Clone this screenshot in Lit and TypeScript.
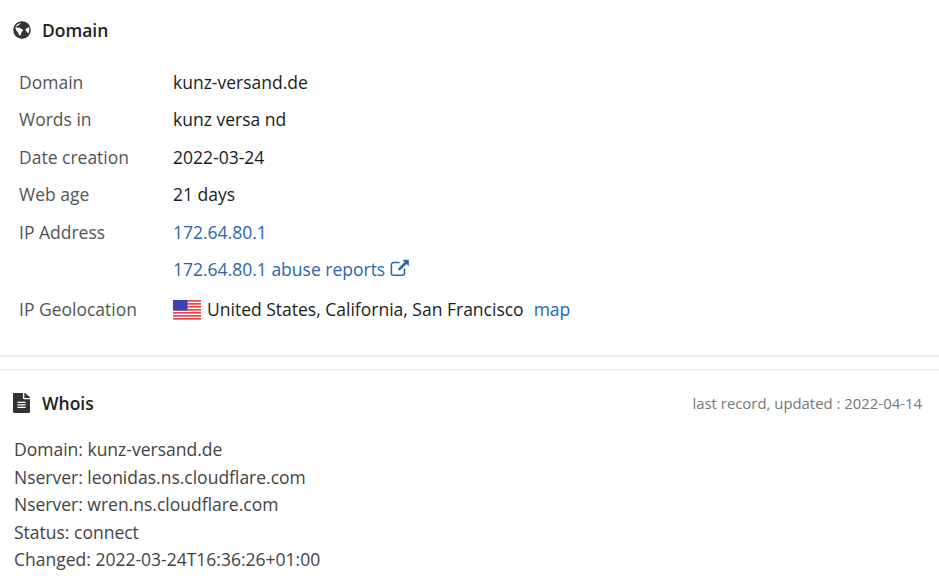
import { LitElement, html, css, svg } from "lit";
import { customElement } from "lit/decorators.js";

const globe = html`<svg class="ico" viewBox="0 0 512 512" width="18" height="18"><path fill="#333" fill-rule="evenodd" d="M256 8C119 8 8 119 8 256s111 248 248 248 248-111 248-248S393 8 256 8zM235 60c-22 16-36 34-60 44-16 7-22 26-38 32-16 6-46 6-42 32 4 24 30 18 48 30 14 10 22-16 40-12 22 4 22 26 46 34 24 8 58 18 56 46-2 30-34 36-46 58-10 18 0 42-12 60-10 14-22 22-30 34-34-26-44-68-58-92-12-22-36-30-46-60-8-22 -2-44-22-62C78 124 150 66 235 60zm205 282c-14 12-28 0-36-20-10-24-20-34-40-46-20-12-6-36 8-56 10-16 32-8 46-20 12-10 18-30 34-36 20 56 14 124-12 178z"/></svg>`;

const doc = html`<svg class="ico" viewBox="0 0 384 512" width="17" height="20" preserveAspectRatio="none"><path fill="#333" d="M224 136V0H24C10.700 0 0 10.700 0 24v464c0 13.300 10.700 24 24 24h336c13.300 0 24-10.700 24-24V160H248c-13.200 0-24-10.800-24-24zm64 236c0 6.600-5.400 12-12 12H108c-6.600 0-12-5.400-12-12v-8c0-6.600 5.400-12 12-12h168c6.600 0 12 5.400 12 12v8zm0-64c0 6.600-5.400 12-12 12H108c-6.600 0-12-5.400-12-12v-8c0-6.600 5.400-12 12-12h168c6.600 0 12 5.400 12 12v8zm0-72v8c0 6.600-5.400 12-12 12H108c-6.600 0-12-5.400-12-12v-8c0-6.600 5.400-12 12-12h168c6.600 0 12 5.400 12 12zm96-114.100v6.100H256V0h6.100c6.400 0 12.500 2.500 17 7l97.900 98c4.500 4.500 7 10.600 7 16.900z"/></svg>`;

const ext = html`<svg class="ext" viewBox="0 0 20 18" width="20" height="18"><path fill="none" stroke="#2a66b0" stroke-width="1.500" stroke-linecap="round" d="M14.500 10v4.200a2 2 0 0 1-2 2H3.400a2 2 0 0 1-2-2V5.600a2 2 0 0 1 2-2H9"/><path fill="#2a66b0" d="M12.300 0.800h6.500v6.500l-2.300-2.300-6.800 6.800-1.900-1.900 6.800-6.800z"/></svg>`;

const flag = html`<svg class="flag" viewBox="0 0 28 21" width="28" height="21">
  <rect width="28" height="21" fill="#fff"/>
  ${[1, 4, 7, 10, 13, 16, 19].map(
    (y) => svg`<rect x="0" y=${y} width="28" height="1.700" fill="#e8484c"/>`
  )}
  <rect x="0" y="1" width="14.500" height="10.500" fill="#3f43ad"/>
</svg>`;

@customElement("app-root")
export class AppRoot extends LitElement {
  static styles = css`
    :host {
      display: block;
      height: 583px;
      overflow: hidden;
      background: #fff;
      font-family: "Open Sans", sans-serif;
      font-size: 17.500px;
      color: #1c1c1c;
    }
    .head {
      display: flex;
      align-items: center;
      gap: 11px;
      padding: 0 14px 0 13px;
      height: 60px;
      font-weight: 600;
      color: #222;
    }
    .ico { flex: none; }
    .table {
      display: grid;
      grid-template-columns: 154px 1fr;
      grid-auto-rows: 37.500px;
      align-items: center;
      padding: 3px 19px 0;
    }
    .k { color: #555; }
    a { color: #2a66b0; text-decoration: none; }
    .ext { vertical-align: -1px; }
    .geo {
      display: flex;
      align-items: center;
      padding-top: 5px;
    }
    .kgeo { padding-top: 5px; }
    .flag { margin-right: 6px; }
    .map { margin-left: 10px; }
    .rule1 { margin-top: 29px; height: 2px; background: #eee; }
    .rule2 { margin-top: 12px; height: 2px; background: #f1f1f1; }
    .whois { height: 64px; justify-content: space-between; padding-right: 17px; }
    .title { display: flex; align-items: center; gap: 12px; }
    .stamp { font-weight: 400; font-size: 14.900px; color: #777; }
    .rec { padding: 0 14px; line-height: 27.500px; color: #444; margin-top: 1.500px; }
  `;

  render() {
    return html`
      <div class="head">${globe}<span>Domain</span></div>
      <div class="table">
        <div class="k">Domain</div><div>kunz-versand.de</div>
        <div class="k">Words in</div><div>kunz versa nd</div>
        <div class="k">Date creation</div><div>2022-03-24</div>
        <div class="k">Web age</div><div>21 days</div>
        <div class="k">IP Address</div><div><a>172.64.80.1</a></div>
        <div></div><div><a>172.64.80.1 abuse reports ${ext}</a></div>
        <div class="k kgeo">IP Geolocation</div>
        <div class="geo">${flag}<span>United States, California, San Francisco</span><a class="map">map</a></div>
      </div>
      <div class="rule1"></div>
      <div class="rule2"></div>
      <div class="head whois">
        <div class="title">${doc}<span>Whois</span></div>
        <div class="stamp">last record, updated : 2022-04-14</div>
      </div>
      <div class="rec">
        <div>Domain: kunz-versand.de</div>
        <div>Nserver: leonidas.ns.cloudflare.com</div>
        <div>Nserver: wren.ns.cloudflare.com</div>
        <div>Status: connect</div>
        <div>Changed: 2022-03-24T16:36:26+01:00</div>
      </div>
    `;
  }
}
